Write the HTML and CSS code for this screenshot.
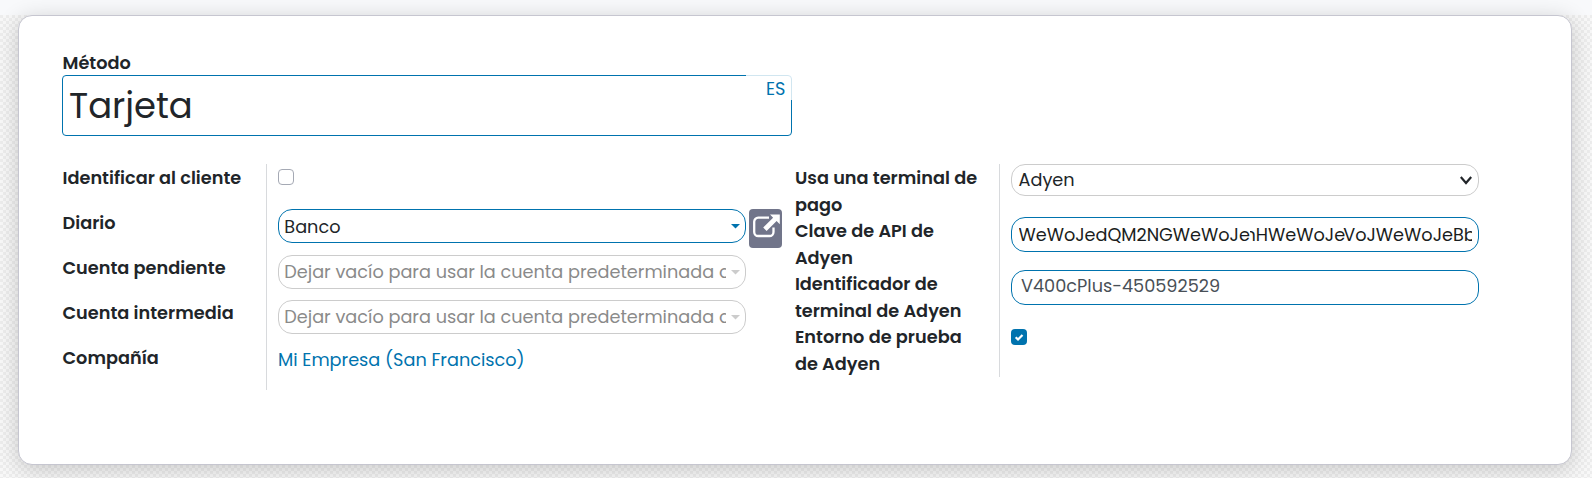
FILE: index.html
```
<!DOCTYPE html>
<html lang="es">
<head>
<meta charset="utf-8">
<title>Método de pago</title>
<link rel="stylesheet" href="styles.css">
</head>
<body>
<div class="topbar"></div>
<main class="sheet">
  <div class="label method-label">Método</div>
  <div class="title-field">
    <span class="title-value">Tarjeta</span>
    <span class="lang">ES</span>
  </div>
  <div class="groups">
    <section class="group group-left">
      <div class="labels">
        <span class="label">Identificar al cliente</span>
        <span class="label">Diario</span>
        <span class="label">Cuenta pendiente</span>
        <span class="label">Cuenta intermedia</span>
        <span class="label">Compañía</span>
      </div>
      <div class="values">
        <span class="check"></span>
        <div class="journal-row">
          <div class="pill active combo"><span class="clip">Banco</span><i class="caret"></i></div>
          <span class="open"><svg viewBox="0 0 28 26" width="28" height="26"><path d="M17 4.700H6.200a4 4 0 0 0-4 4V19a4 4 0 0 0 4 4h11.300a4 4 0 0 0 4-4v-4.500" fill="none" stroke="#fff" stroke-width="2.300"/><path d="M18 1.500h9.800v9.800l-3.200-3.200L14.600 18l-3.400-3.400 9.900-9.900z" fill="#fff"/></svg></span>
        </div>
        <div class="pill combo empty"><span class="clip">Dejar vacío para usar la cuenta predeterminada de</span><i class="caret"></i></div>
        <div class="pill combo empty"><span class="clip">Dejar vacío para usar la cuenta predeterminada de</span><i class="caret"></i></div>
        <a class="company">Mi Empresa (San Francisco)</a>
      </div>
    </section>
    <section class="group group-right">
      <div class="labels">
        <span class="label">Usa una terminal de<br>pago</span>
        <span class="label">Clave de API de<br>Adyen</span>
        <span class="label">Identificador de<br>terminal de Adyen</span>
        <span class="label">Entorno de prueba<br>de Adyen</span>
      </div>
      <div class="values">
        <div class="pill select"><span>Adyen</span><svg viewBox="0 0 12 9" width="12" height="9"><path d="M.8 1l5.200 6 5.200-6" fill="none" stroke="#212529" stroke-width="2.200"/></svg></div>
        <div class="pill active key"><span class="clip"><span class="lead">WeWoJedQM2NG</span><span class="over">WeWoJe</span><span class="under">nH</span><span>WeWoJe</span><span class="tail">VoJ</span><span>WeWoJeBb</span></span></div>
        <div class="pill active serial"><span>V400cPlus-450592529</span></div>
        <span class="check checked"><svg viewBox="0 0 16 16" width="16" height="16"><path d="M4.700 8.200l2.300 2.300 4.500-4.600" fill="none" stroke="#fff" stroke-width="2.200"/></svg></span>
      </div>
    </section>
  </div>
</main>
</body>
</html>
```
FILE: styles.css
```
* { box-sizing: border-box; }
body {
  margin: 0;
  height: 478px;
  overflow: hidden;
  font: 17.7px/26.5px Poppins, Inter, "Open Sans", sans-serif;
  color: #212529;
  background: repeating-conic-gradient(#ededed 0 25%, #f8f8f8 0 50%) 0 0 / 6px 6px;
}
svg { display: block; }
.topbar { height: 15px; background: #f8f9fb; }
.sheet {
  width: 1554px;
  height: 450px;
  margin-left: 18px;
  padding: 34px 43px;
  background: #fff;
  border: 1px solid #c6c6d0;
  border-radius: 14px;
  box-shadow: 0 4px 22px rgba(0, 0, 0, .19);
}
.label { font-weight: 600; white-space: nowrap; letter-spacing: .02px; }
.method-label { height: 25px; margin-left: .5px; }
.title-field {
  display: flex;
  width: 730px;
  height: 61px;
  border: 1px solid #0073ae;
  border-radius: 4px;
}
.title-value { flex: 1; padding-left: 6px; font-size: 35.4px; line-height: 59px; }
.lang {
  width: 46px;
  height: 25px;
  margin: -1px -1px 0 0;
  padding: 1px 6.5px 0 0;
  text-align: right;
  color: #0073ae;
  background: rgba(255, 255, 255, .82);
  z-index: 1;
}
.groups { display: flex; margin-top: 28px; }
.group { display: flex; align-items: flex-start; }
.group-left { width: 732px; }
.labels { display: flex; flex-direction: column; padding: 1px 0 0 .5px; }
.group-left .labels { width: 205px; height: 226px; gap: 18.5px; border-right: 1px solid #d8dadd; }
.group-right .labels { width: 206px; height: 213px; padding-left: .9px; border-right: 1px solid #d8dadd; }
.values { display: flex; flex-direction: column; align-items: flex-start; padding-left: 11px; }
.check { width: 16px; height: 16px; margin-top: 5px; border: 1px solid #a5a9b4; border-radius: 4px; }
.checked { margin-top: 24px; border: 0; background: #0073ae; }
.journal-row { display: flex; gap: 3px; height: 34px; margin-top: 24px; margin-bottom: 12px; }
.pill {
  display: flex;
  align-items: center;
  height: 34px;
  border: 1px solid #ccc;
  border-radius: 14px;
  white-space: nowrap;
}
.active { border-color: #0073ae; }
.combo { width: 468px; padding: 2px 4.500px 0 5.3px; }
.clip { flex: 1; overflow: hidden; }
.combo .clip { margin-right: 5px; }
.caret { width: 10px; height: 5px; margin-top: -2px; background: #0073ae; clip-path: polygon(0 0, 100% 0, 50% 100%); }
.empty { padding-top: 0; color: #8a8a8a; }
.empty .caret { margin-top: 0; background: #ccc; }
.empty + .empty { margin-top: 11px; }
.open { width: 33px; height: 39px; padding: 4px 0 0 3px; border-radius: 4px; background: #71758a; }
.company { margin-top: 13px; color: #0073ae; }
.group-right .pill { width: 468px; }
.group-right .select { height: 32px; justify-content: space-between; padding: 0 6.5px; }
.group-right .key { height: 35px; margin-top: 21px; padding: 1px 6px 0 6.500px; color: #1a1d20; }
.key .clip { display: flex; }
.lead { letter-spacing: -.03px; }
.over { position: relative; z-index: 1; background: #fff; }
.under { margin-left: -5.5px; }
.tail { margin-left: -2px; }
.group-right .serial { height: 35px; margin-top: 18px; padding: 0 9px 2px; color: #495057; }
```
